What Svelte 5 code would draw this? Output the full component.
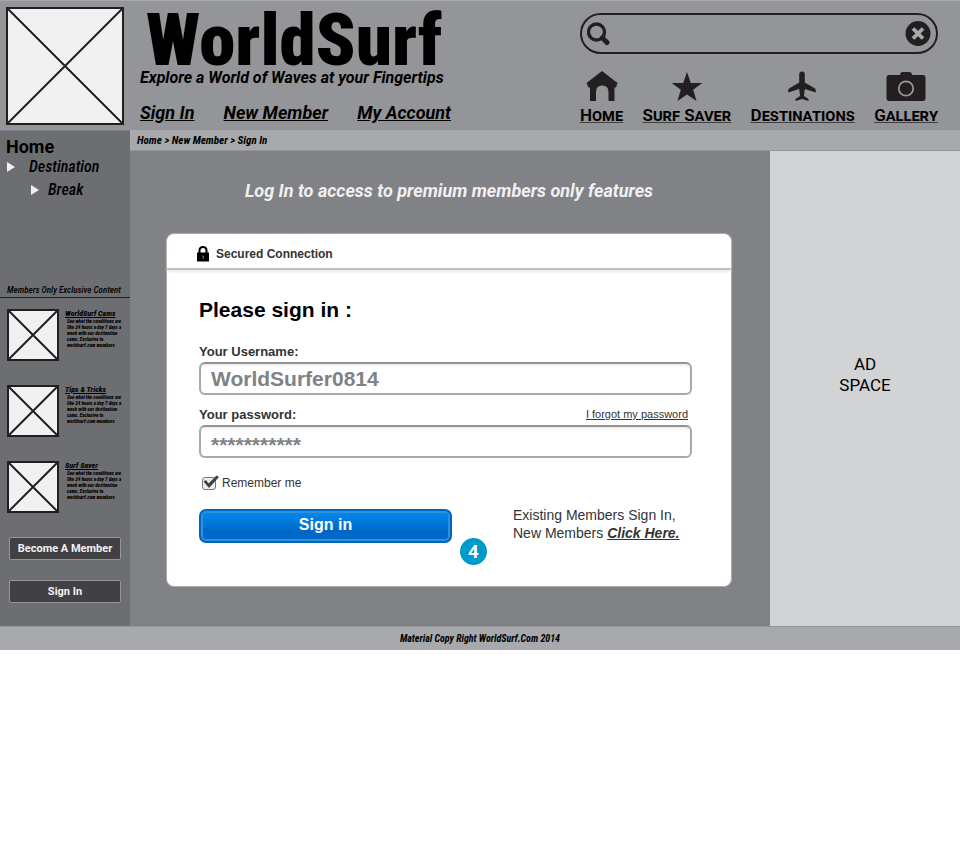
<script>
  let username = $state('WorldSurfer0814');
  let password = $state('***********');
  let remember = $state(true);
  let query = $state('');

  const blurb = ['See what the conditions are', 'like 24 hours a day 7 days a', 'week with our destination', 'cams. Exclusive to', 'worldsurf.com members'];
  const promos = ['WorldSurf Cams', 'Tips & Tricks', 'Surf Saver'];
</script>

{#snippet placeholder(size, stroke)}
  <svg class="placeholder" width={size} height={size} viewBox="0 0 {size} {size}" aria-hidden="true">
    <rect x="1" y="1" width={size - 2} height={size - 2} fill="#f1f1f2" stroke="#231f20" stroke-width={stroke} />
    <path d="M1 1L{size - 1} {size - 1}M{size - 1} 1L1 {size - 1}" stroke="#231f20" stroke-width={stroke} />
  </svg>
{/snippet}

<div class="page">
  <header>
    {@render placeholder(118, 2)}
    <div class="brand">
      <h1>WorldSurf</h1>
      <p class="tagline">Explore a World of Waves at your Fingertips</p>
      <nav class="account">
        <a href="#signin">Sign In</a>
        <a href="#new">New Member</a>
        <a href="#account">My Account</a>
      </nav>
    </div>
    <div class="tools">
      <form class="search" role="search">
        <svg width="24" height="24" viewBox="0 0 24 24" aria-hidden="true">
          <circle cx="9.500" cy="10" r="8" fill="none" stroke="#231f20" stroke-width="3.400" />
          <path d="M15.500 16L20 20.500" stroke="#231f20" stroke-width="5" stroke-linecap="round" />
        </svg>
        <input aria-label="Search" bind:value={query} />
        <button type="button" aria-label="Clear search" onclick={() => (query = '')}>
          <svg width="26" height="26" viewBox="0 0 26 26" aria-hidden="true">
            <circle cx="13" cy="12.500" r="12.500" fill="#231f20" />
            <path d="M8 7.500L18 17.500M18 7.500L8 17.500" stroke="#a7a9ac" stroke-width="3.800" />
          </svg>
        </button>
      </form>
      <nav class="sections">
        <a href="#home">
          <svg width="32" height="32" viewBox="0 0 32 32" aria-hidden="true">
            <path d="M16 1L31.500 13L30 17.500H28.500V31H22.500V22Q22.500 15.500 16.200 15.500Q10 15.500 10 22V31H4V17.500H2.500L0.500 13Z" fill="#231f20" />
          </svg>
          <span>Home</span>
        </a>
        <a href="#saver">
          <svg width="32" height="32" viewBox="0 0 32 32" aria-hidden="true">
            <path d="M16 2L19.800 13H31.200L22.200 19.800L25.500 31L16 24.400L6.500 31L9.800 19.800L0.800 13H12.200Z" fill="#231f20" />
          </svg>
          <span>Surf Saver</span>
        </a>
        <a href="#destinations">
          <svg width="32" height="32" viewBox="0 0 32 32" aria-hidden="true">
            <path d="M15 1.500Q17.800 1.500 17.800 4.500V12.500L28 18.500Q29.200 19.500 28.800 22.500L17.800 19L17 26L21.500 29V31L15 29L8.500 31V29L13 26L12.200 19L1.200 22.500Q0.800 19.500 2 18.500L12.200 12.500V4.500Q12.200 1.500 15 1.500Z" fill="#231f20" />
          </svg>
          <span>Destinations</span>
        </a>
        <a href="#gallery">
          <svg width="40" height="32" viewBox="0 0 40 32" aria-hidden="true">
            <path d="M14 5Q14 2 17 2H23Q26 2 26 5H37Q39.500 5 39.500 8V28Q39.500 31 37 31H3Q0.500 31 0.500 28V8Q0.500 5 3 5Z" fill="#231f20" />
            <circle cx="20" cy="18.500" r="7.200" fill="none" stroke="#939598" stroke-width="1.800" />
          </svg>
          <span>Gallery</span>
        </a>
      </nav>
    </div>
  </header>

  <div class="body">
    <aside class="sidebar">
      <h2>Home</h2>
      <ul class="tree">
        <li><i></i><a href="#destination">Destination</a></li>
        <li class="child"><i></i><a href="#break">Break</a></li>
      </ul>
      <h3>Members Only Exclusive Content</h3>
      <div class="promos">
        {#each promos as title}
          <article>
            {@render placeholder(52, 2)}
            <div>
              <a href="#promo">{title}</a>
              <p>{#each blurb as line}<span>{line}</span>{/each}</p>
            </div>
          </article>
        {/each}
      </div>
      <div class="actions">
        <button type="button">Become A Member</button>
        <button type="button">Sign In</button>
      </div>
    </aside>

    <div class="center">
      <nav class="crumbs" aria-label="Breadcrumb">Home &gt; New Member &gt; Sign In</nav>
      <div class="columns">
        <main>
          <p class="lead">Log In to access to premium members only features</p>
          <form class="card" onsubmit={(e) => e.preventDefault()}>
            <div class="secure">
              <svg width="12" height="16" viewBox="0 0 12 16" aria-hidden="true">
                <path d="M2.500 7V4.500Q2.500 1 6 1Q9.500 1 9.500 4.500V7" fill="none" stroke="#000" stroke-width="2" />
                <path d="M0 6.500H12V15.500H0Z" fill="#000" />
                <path d="M5.200 10H6.200V13" fill="none" stroke="#888" stroke-width="1" />
              </svg>
              <span>Secured Connection</span>
            </div>
            <div class="fields">
              <h2>Please sign in :</h2>
              <label for="user">Your Username:</label>
              <input id="user" class="text" bind:value={username} />
              <div class="row">
                <label for="pass">Your password:</label>
                <a href="#forgot">I forgot my password</a>
              </div>
              <input id="pass" class="text masked" autocomplete="off" bind:value={password} />
              <label class="remember">
                <span class="tick">
                  <input type="checkbox" bind:checked={remember} />
                  {#if remember}
                    <svg width="18" height="14" viewBox="0 0 18 14" aria-hidden="true">
                      <path d="M1.500 6.500L4 5L6.500 8.500L14.500 0.500L17 2L7 13Z" fill="#414042" />
                    </svg>
                  {/if}
                </span>
                Remember me
              </label>
              <div class="submit">
                <div class="button-wrap">
                  <button type="submit">Sign in</button>
                  <span class="badge">4</span>
                </div>
                <p>Existing Members Sign In,<br />New Members <a href="#new">Click Here.</a></p>
              </div>
            </div>
          </form>
        </main>
        <aside class="ad">AD<br />SPACE</aside>
      </div>
    </div>
  </div>

  <footer>Material Copy Right WorldSurf.Com 2014</footer>
</div>

<style>
  :global(body) { margin: 0; background: #fff; }
  .page { font-family: Roboto, sans-serif; color: #000; }
  .page * { box-sizing: border-box; }
  h1, h2, h3, p, ul { margin: 0; padding: 0; }
  a { color: inherit; }
  svg { display: block; flex: none; }
  button { cursor: pointer; }

  header {
    display: flex;
    align-items: flex-start;
    height: 130px;
    padding: 6px 22px 0 6px;
    background: #939598;
    border-top: 1px solid #a7a9ac;
  }
  .brand { margin-left: 16px; width: 311px; }
  h1 {
    height: 61px;
    padding-left: 6px;
    font: 900 73px/66px "Roboto Condensed", Roboto, sans-serif;
    white-space: nowrap;
  }
  .tagline { font: italic 700 16px/20px Roboto, sans-serif; white-space: nowrap; }
  .account {
    display: flex;
    justify-content: space-between;
    margin-top: 13px;
    font: italic 700 18px/24px Roboto, sans-serif;
  }
  .tools { width: 358px; margin-left: auto; padding-top: 6px; }
  .search {
    display: flex;
    align-items: center;
    height: 41px;
    padding: 0 5px;
    border: 2px solid #231f20;
    border-radius: 21px;
  }
  .search input {
    flex: 1;
    min-width: 0;
    padding: 0 8px;
    border: 0;
    outline: 0;
    background: none;
    font: 18px Roboto, sans-serif;
  }
  .search button { padding: 0; border: 0; background: none; }
  .sections { display: flex; justify-content: space-between; margin-top: 16px; }
  .sections a {
    display: flex;
    flex-direction: column;
    align-items: center;
    font: small-caps 600 17px/24px Roboto, sans-serif;
    text-decoration: underline;
    text-decoration-color: #414042;
  }
  .sections span { padding-top: 1px; }

  .body { display: flex; align-items: stretch; }
  .sidebar {
    display: flex;
    flex-direction: column;
    flex: none;
    width: 130px;
    background: #6d6e71;
    border-top: 1px solid #808285;
  }
  .sidebar h2 { padding: 4px 6px 0; font: 700 18px/24px Roboto, sans-serif; }
  .tree { list-style: none; font: italic 500 16px/23px "Roboto Condensed", Roboto, sans-serif; }
  .tree li { display: flex; align-items: center; gap: 14px; padding-left: 7px; line-height: 16px; }
  .tree .child { gap: 9px; padding: 7px 0 0 31px; }
  .tree a { text-decoration: none; }
  .tree i {
    border-left: 8px solid #f1f1f2;
    border-top: 5px solid transparent;
    border-bottom: 5px solid transparent;
  }
  h3 {
    margin-top: 86px;
    padding-left: 7px;
    border-bottom: 1px solid #231f20;
    font: italic 500 9px/13px "Roboto Condensed", Roboto, sans-serif;
    white-space: nowrap;
  }
  .promos { display: flex; flex-direction: column; gap: 24px; padding: 11px 0 0 7px; }
  article { display: flex; gap: 6px; }
  article a {
    display: block;
    font: italic 800 8px/9px "Roboto Condensed", Roboto, sans-serif;
    white-space: nowrap;
  }
  article p { padding-left: 2px; font: italic 900 5px/6px "Roboto Condensed", Roboto, sans-serif; }
  article span { display: block; white-space: nowrap; }
  .actions { display: flex; flex-direction: column; gap: 20px; padding: 24px 9px 23px; }
  .actions button {
    height: 23px;
    padding: 0;
    border: 1px solid #939598;
    border-radius: 2px;
    background: #414042;
    color: #f1f1f2;
    font: 700 11px/20px Roboto, sans-serif;
    white-space: nowrap;
  }

  .center { display: flex; flex: 1; flex-direction: column; min-width: 0; }
  .crumbs {
    height: 21px;
    padding-left: 7px;
    background: #a7a9ac;
    border-bottom: 1px solid #939598;
    font: italic 700 11px/21px "Roboto Condensed", Roboto, sans-serif;
  }
  .columns { display: flex; flex: 1; }
  main { flex: 1; min-width: 0; padding: 27px 38px 39px 36px; background: #808285; }
  .lead {
    color: #f1f1f2;
    font: italic 700 18px/26px Roboto, sans-serif;
    text-align: center;
  }
  .ad {
    flex: none;
    width: 190px;
    padding-top: 203px;
    background: #d1d3d4;
    font: 400 17px/21px Roboto, sans-serif;
    text-align: center;
  }

  .card {
    margin-top: 29px;
    border: 1px solid #a7a9ac;
    border-radius: 8px;
    background: #fff;
    box-shadow: 0 0 1px #939598;
    color: #333;
    font-family: "Liberation Sans", Arial, sans-serif;
  }
  .secure {
    display: flex;
    align-items: center;
    gap: 7px;
    height: 36px;
    padding: 5px 0 0 30px;
    border-bottom: 2px solid #c0c0c0;
    box-shadow: 0 3px 3px -1px #e8e8e8;
    font-size: 12px;
    font-weight: 700;
  }
  .fields { padding: 26px 39px 43px 32px; }
  .fields h2 { color: #000; font-size: 21px; line-height: 28px; }
  .fields > label { display: block; font-size: 13px; font-weight: 700; line-height: 16px; }
  .fields h2 + label { margin-top: 20px; }
  .text {
    display: block;
    width: 100%;
    height: 33px;
    margin-top: 2px;
    padding: 1px 10px 0;
    border: 2px solid #a7a9ac;
    border-top-color: #939393;
    border-radius: 6px;
    background: #fff;
    box-shadow: inset 0 2px 2px #eee;
    color: #808285;
    font: 700 21px/28px "Liberation Sans", Arial, sans-serif;
  }
  .masked { padding-top: 6px; }
  .row {
    display: flex;
    justify-content: space-between;
    margin-top: 12px;
    padding-right: 4px;
    font-size: 11px;
    line-height: 14px;
  }
  .row label { font-size: 13px; font-weight: 700; line-height: 16px; }
  .fields .remember {
    display: flex;
    align-items: center;
    gap: 4px;
    margin-top: 17px;
    padding-left: 3px;
    font-size: 12px;
    font-weight: 400;
  }
  .tick { position: relative; width: 16px; height: 14px; }
  .tick input {
    appearance: none;
    display: block;
    width: 14px;
    height: 13px;
    margin: 1px 0 0;
    border: 1px solid #77787b;
    border-radius: 3px;
    background: #eee;
  }
  .tick svg { position: absolute; left: 0; top: -1px; pointer-events: none; }
  .submit { display: flex; align-items: flex-start; margin-top: 18px; }
  .button-wrap { position: relative; width: 253px; }
  .button-wrap button {
    width: 100%;
    height: 34px;
    padding: 0 0 3px;
    border: 2px solid #0066c0;
    border-radius: 7px;
    background: linear-gradient(#008cf5, #0066c6 70%, #006bcf);
    box-shadow: inset 0 0 0 2px #2f91d8;
    color: #fff;
    font: 700 16px/24px "Liberation Sans", Arial, sans-serif;
  }
  .badge {
    position: absolute;
    left: 261px;
    top: 29px;
    width: 27px;
    height: 27px;
    border-radius: 50%;
    background: #0099cc;
    color: #fff;
    font: 700 18px/27px "Open Sans", sans-serif;
    text-align: center;
  }
  .submit p { margin-left: 61px; margin-top: -3px; font-size: 14px; line-height: 18px; white-space: nowrap; }
  .submit p a { font-style: italic; font-weight: 700; }

  footer {
    height: 24px;
    background: #a7a9ac;
    border-top: 1px solid #939598;
    font: italic 700 10px/23px "Roboto Condensed", Roboto, sans-serif;
    text-align: center;
  }
</style>
